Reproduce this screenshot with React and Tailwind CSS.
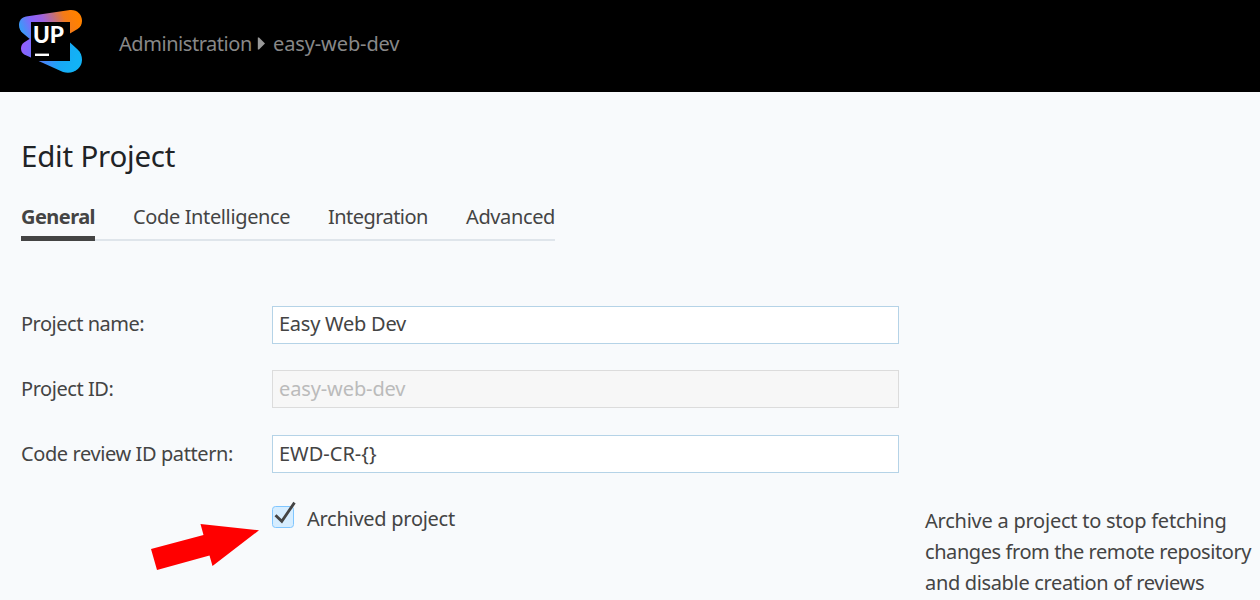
import React from "react";

function Logo() {
  return (
    <svg className="h-[66px] w-[66px] shrink-0" viewBox="17 8 66 66" role="img" aria-label="Upsource">
      <defs>
        <linearGradient id="top" gradientUnits="userSpaceOnUse" x1="25" y1="37" x2="76" y2="16">
          <stop offset="0" stopColor="#3d98f7" />
          <stop offset="0.24" stopColor="#8a62fb" />
          <stop offset="0.42" stopColor="#9d62e0" />
          <stop offset="0.62" stopColor="#c26f80" />
          <stop offset="0.8" stopColor="#f47b18" />
          <stop offset="1" stopColor="#ff8100" />
        </linearGradient>
        <linearGradient id="bottom" gradientUnits="userSpaceOnUse" x1="21" y1="44" x2="76" y2="62">
          <stop offset="0" stopColor="#9a5cff" />
          <stop offset="0.35" stopColor="#5d79fa" />
          <stop offset="0.75" stopColor="#18a8f5" />
          <stop offset="1" stopColor="#12b2f5" />
        </linearGradient>
      </defs>
      <path d="M26 16.6 L70 10 C77 9.4 82 14.4 82 21 C82 24.6 80.4 27.2 77.6 28.9 L64 37 L31 40 L22.6 33 C20.4 31 19 28.5 19 25 C19 20.5 22 17.3 26 16.6Z" fill="url(#top)" />
      <path d="M31 38 L24 42.5 C21.8 44 21 46 21 48.5 C21 51.2 22 53 24.2 54.5 L63 72 C73 75 82 68.3 82 60 C82 55.5 80.6 52.3 77.4 49.2 L70 42.6Z" fill="url(#bottom)" />
      <path d="M31 22H70V61H31Z" />
      <path d="M31 58.2V61H38Z" />
      <text x="33" y="43.3" fill="#fff" fontFamily="Lato, sans-serif" fontSize="23" fontWeight="900" textLength="31" lengthAdjust="spacingAndGlyphs">UP</text>
      <path d="M35 53.6H49V56H35Z" fill="#fff" />
    </svg>
  );
}

const fieldBase = "h-[38px] w-[627px] shrink-0 border pt-0 px-[6px] text-[20px] outline-none ";

function Field({ id, label, value, labelClass, className, disabled }) {
  return (
    <div className="flex h-[38px] items-center">
      <label htmlFor={id} className={"w-[251px] shrink-0 whitespace-nowrap " + labelClass}>{label}</label>
      <input id={id} defaultValue={value} disabled={disabled} className={fieldBase + className} />
    </div>
  );
}

export default function App() {
  return (
    <div className="flex h-[600px] w-[1260px] flex-col overflow-hidden bg-[#f8fafc] font-['Noto_Sans',sans-serif] text-[20px] leading-[30px] text-[#444]">
      <header className="flex h-[92px] shrink-0 items-start bg-black pt-2 pl-[17px] text-[#888]">
        <Logo />
        <nav className="ml-[36px] flex h-[72px] items-center whitespace-nowrap">
          <span className="w-[138px] tracking-[-0.45px]">Administration</span>
          <svg className="mb-[2px] h-[13px] w-[9px]" viewBox="0 0 9 13"><path d="M.8 .5H2L8 6.5L2 12.5H.8Z" fill="#999" /></svg>
          <span className="ml-[7px] tracking-[-0.12px]">easy-web-dev</span>
        </nav>
      </header>
      <main className="flex flex-col pl-[21px]">
        <h1 className="mt-[42px] h-[44px] text-[29.5px] leading-[44px] tracking-[-0.22px] font-[370] whitespace-nowrap text-[#1f2326]">Edit Project</h1>
        <nav className="mt-[23px] flex h-[40px] w-[534px] border-b-2 border-[#dfe5eb] whitespace-nowrap">
          <a className="h-[40px] w-[74px] shrink-0 border-b-5 border-[#444] pt-px font-bold tracking-[-0.55px]">General</a>
          <a className="ml-[38px] w-[158px] shrink-0 pt-px tracking-[-0.37px]">Code Intelligence</a>
          <a className="ml-[37px] w-[100px] shrink-0 pt-px tracking-[-0.55px]">Integration</a>
          <a className="ml-[38px] w-[89px] shrink-0 pt-px tracking-[-0.38px]">Advanced</a>
        </nav>
        <form className="mt-[65px] flex flex-col">
          <Field id="name" label="Project name:" value="Easy Web Dev" labelClass="pb-[2px] tracking-[-0.48px]" className="border-[#b5d3e7] bg-white pb-[4px] tracking-[-0.25px]" />
          <div className="h-[26px]" />
          <Field id="pid" label="Project ID:" value="easy-web-dev" labelClass="tracking-[-0.45px]" className="border-[#dcdcdc] bg-[#f7f7f7] pb-[2px] tracking-[-0.12px] text-[#bbb]" disabled />
          <div className="h-[27px]" />
          <Field id="pattern" label="Code review ID pattern:" value="EWD-CR-{}" labelClass="tracking-[-0.4px]" className="border-[#b5d3e7] bg-white pb-[2px]" />
          <div className="flex pt-[24px]">
            <svg className="mt-[25px] ml-[129px] h-[50px] w-[110px] shrink-0" viewBox="150 522 110 50">
              <path d="M151 549L203.5 535L200.5 524L259 530.3L212.5 566L209.5 555.5L157 570Z" fill="#f00" />
            </svg>
            <label className="ml-[11px] flex shrink-0">
              <svg className="mt-[2px] h-[32px] w-[28px] shrink-0" viewBox="271 499 28 32">
                <rect x="272.5" y="506.5" width="21" height="21" rx="3" fill="#d6edff" stroke="#80c6ff" />
                <path d="M275.5 515.3L281.8 521.3L294.5 502.6" fill="none" stroke="#444" strokeWidth="2.8" />
              </svg>
              <span className="mt-[7px] ml-[8px] w-[618px] tracking-[-0.27px] whitespace-nowrap">Archived project</span>
            </label>
            <p className="mt-[8px] w-[335px] shrink-0 leading-[31px] whitespace-nowrap">
              <span className="block tracking-[-0.24px]">Archive a project to stop fetching</span>
              <span className="block tracking-[-0.42px]">changes from the remote repository</span>
              <span className="block tracking-[-0.34px]">and disable creation of reviews</span>
            </p>
          </div>
        </form>
      </main>
    </div>
  );
}
